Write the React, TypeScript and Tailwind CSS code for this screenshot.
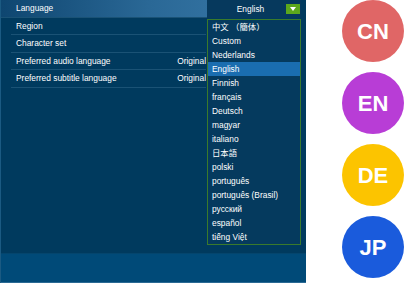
import React from 'react';

const settings = [
  { label: 'Language', value: '' },
  { label: 'Region', value: '' },
  { label: 'Character set', value: '' },
  { label: 'Preferred audio language', value: 'Original' },
  { label: 'Preferred subtitle language', value: 'Original' },
];

const languages = [
  '中文 （簡体）',
  'Custom',
  'Nederlands',
  'English',
  'Finnish',
  'français',
  'Deutsch',
  'magyar',
  'italiano',
  '日本語',
  'polski',
  'português',
  'português (Brasil)',
  'русский',
  'español',
  'tiếng Việt',
];

const badges = [
  { code: 'CN', color: 'bg-[#e06666]' },
  { code: 'EN', color: 'bg-[#b83dd6]' },
  { code: 'DE', color: 'bg-[#fcc400]' },
  { code: 'JP', color: 'bg-[#1a5bdc]' },
];

const App: React.FC = () => {
  return (
    <div
      className="flex h-[283px] w-[410px] bg-white"
      style={{ fontFamily: '"Liberation Sans", "Noto Sans CJK SC", sans-serif' }}
    >
      <div className="flex w-[306px] flex-col bg-[#003a5e] border-l border-[#1b5a82]">
        <div className="relative h-[253px]">
          <div className="flex flex-col pl-[10px] pt-0">
            {settings.map((s, i) => (
              <div
                key={s.label}
                className={
                  'flex h-[17.6px] items-center border-b border-[#1a5275] pl-[5px] text-[8.4px] text-white ' +
                  (i === 0
                    ? 'w-[296px] -ml-[10px] pl-[15px] bg-gradient-to-r from-[#0e4670] via-[#2a6896] to-[#3b7cac]'
                    : 'w-[195px]')
                }
              >
                <span className="w-[162px]">{s.label}</span>
                <span>{s.value}</span>
              </div>
            ))}
          </div>

          <div className="absolute left-[206px] top-0 flex h-[18px] w-[94px] items-center bg-[#06395d] text-[8.4px] text-white">
            <span className="flex-1 pl-[8px] text-center">English</span>
            <span className="mr-[1px] flex h-[10px] w-[14px] items-center justify-center bg-[#5ca81c]">
              <svg width="6" height="4" viewBox="0 0 6 4">
                <path d="M0 0h6L3 4z" fill="white" />
              </svg>
            </span>
          </div>

          <div className="absolute left-[206px] top-[19px] w-[94px] border-[1.5px] border-[#3a7a2c] bg-[#053a5e]">
            {languages.map((l) => (
              <div
                key={l}
                className={
                  'flex h-[14px] items-center pl-[4px] text-[8.4px] text-white ' +
                  (l === 'English' ? 'bg-[#1a6db0]' : '')
                }
              >
                {l}
              </div>
            ))}
          </div>
        </div>
        <div className="flex-1 border-t border-[#04456d] bg-[#004a78] border-b border-b-[#2a6a94]" />
      </div>

      <div className="flex flex-col gap-[10px] pl-[36px]">
        {badges.map((b) => (
          <div
            key={b.code}
            className={
              'flex h-[62px] w-[62px] items-center justify-center rounded-full text-[22px] font-bold text-white ' +
              b.color
            }
          >
            {b.code}
          </div>
        ))}
      </div>
    </div>
  );
};

export default App;
